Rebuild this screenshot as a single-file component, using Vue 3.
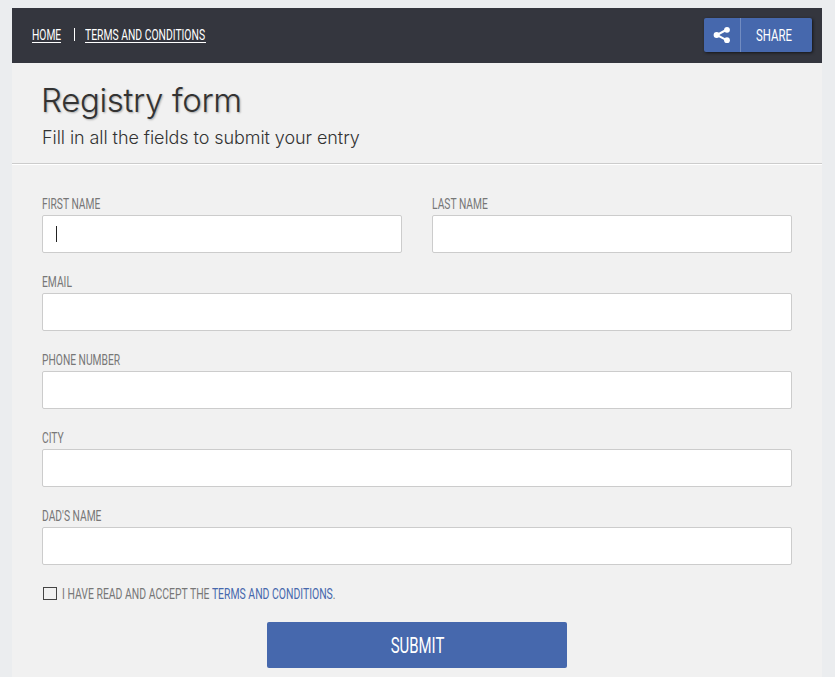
<template>
  <div class="page">
    <header class="topbar">
      <nav class="nav">
        <a href="#" class="nav-home"><span class="condensed">HOME</span></a>
        <i class="divider"></i>
        <a href="#" class="nav-terms"><span class="condensed">TERMS AND CONDITIONS</span></a>
      </nav>
      <button type="button" class="share">
        <span class="share-icon">
          <svg width="18" height="18" viewBox="0 0 18 18">
            <path d="M14 3.5 3.8 9 14 14.3" fill="none" stroke="#fff" stroke-width="2" />
            <circle cx="14" cy="3.8" r="2.9" fill="#fff" />
            <circle cx="3.6" cy="9" r="3" fill="#fff" />
            <circle cx="14" cy="14.2" r="2.9" fill="#fff" />
          </svg>
        </span>
        <span class="share-label"><span class="condensed">SHARE</span></span>
      </button>
    </header>

    <section class="intro">
      <h1>Registry form</h1>
      <p>Fill in all the fields to submit your entry</p>
    </section>

    <form class="form" @submit.prevent>
      <div class="fields">
        <label v-for="field in fields" :key="field.id" class="field" :class="{ half: field.half }">
          <span class="condensed label">{{ field.label }}</span>
          <span class="control">
            <i v-if="active === field.id && !values[field.id]" class="caret"></i>
            <input v-model="values[field.id]" type="text" @focus="active = field.id" />
          </span>
        </label>
      </div>

      <div class="accept">
        <input v-model="accepted" type="checkbox" class="checkbox" />
        <span class="condensed accept-text">I HAVE READ AND ACCEPT THE <a href="#">TERMS AND CONDITIONS</a>.</span>
      </div>

      <button type="submit" class="submit"><span class="condensed">SUBMIT</span></button>
    </form>
  </div>
</template>

<script setup>
import { ref, reactive } from 'vue';

const fields = [
  { id: 'first', label: 'FIRST NAME', half: true },
  { id: 'last', label: 'LAST NAME', half: true },
  { id: 'email', label: 'EMAIL' },
  { id: 'phone', label: 'PHONE NUMBER' },
  { id: 'city', label: 'CITY' },
  { id: 'dad', label: "DAD'S NAME" }
];

const values = reactive({ first: '', last: '', email: '', phone: '', city: '', dad: '' });
const active = ref('first');
const accepted = ref(false);
</script>

<style>
body {
  background: #ebedef;
}
</style>

<style scoped>
.page {
  box-sizing: border-box;
  width: 810px;
  height: 669px;
  margin: 8px 0 0 12px;
  background: #f1f1f1;
  overflow: hidden;
  font-family: Roboto, "Liberation Sans", sans-serif;
}

.condensed {
  display: inline-block;
  white-space: nowrap;
  transform: scaleX(0.685);
  transform-origin: left center;
}

/* top bar */
.topbar {
  display: flex;
  justify-content: space-between;
  box-sizing: border-box;
  height: 55px;
  padding: 10px 10px 0 20px;
  background: #34363e;
}

.nav {
  display: flex;
  height: 33px;
  align-items: center;
}

.nav a {
  height: 16px;
  box-sizing: border-box;
  border-bottom: 1px solid #fff;
  color: #fff;
  font-size: 15px;
  line-height: 16px;
  text-decoration: none;
}

.nav-home {
  width: 29px;
}

.nav-terms {
  width: 121px;
}

.nav-terms .condensed {
  transform: scaleX(0.69);
}

.divider {
  width: 1px;
  height: 13px;
  margin: 0 10px 0 13px;
  background: #fff;
}

.share {
  display: flex;
  width: 108px;
  height: 34px;
  padding: 0;
  border: 0;
  border-radius: 2px;
  background: #4668ad;
  box-shadow: 1px 1px 3px rgba(0, 0, 0, 0.6);
  color: #fff;
  font-family: inherit;
  font-size: 17px;
  line-height: 34px;
}

.share-icon {
  display: flex;
  align-items: center;
  width: 37px;
  height: 34px;
  padding-left: 9px;
  box-sizing: border-box;
  border-right: 1px solid #728cc1;
}

.share-label {
  width: 70px;
  padding-left: 15px;
  box-sizing: border-box;
  text-align: left;
}

.share-label .condensed {
  transform: scaleX(0.67);
}

/* heading */
.intro {
  box-sizing: border-box;
  height: 101px;
  padding: 16px 30px 0;
  border-bottom: 1px solid #ccc;
  box-shadow: 0 1px 0 #fff;
  color: #333;
  font-family: Inter, "Liberation Sans", sans-serif;
}

h1 {
  margin: 0 0 0 -1px;
  font-size: 33px;
  font-weight: 300;
  letter-spacing: -0.35px;
  line-height: 42px;
  text-shadow: 1px 1px 2px rgba(0, 0, 0, 0.3);
}

.intro p {
  margin: 5px 0 0;
  font-size: 18px;
  font-weight: 300;
  letter-spacing: -0.07px;
  line-height: 24px;
}

/* form */
.form {
  padding: 31px 30px 0;
}

.fields {
  display: grid;
  grid-template-columns: 1fr 1fr;
  gap: 20px 30px;
}

.field {
  display: block;
  grid-column: span 2;
  height: 58px;
}

.field.half {
  grid-column: span 1;
}

.label {
  display: block;
  height: 20px;
  color: #777;
  font-size: 15px;
  line-height: 19px;
}

.control {
  display: flex;
  align-items: center;
  box-sizing: border-box;
  height: 38px;
  padding-left: 13px;
  border: 1px solid #ccc;
  border-radius: 2px;
  background: #fff;
}

.control input {
  flex: 1;
  border: 0;
  padding: 0;
  outline: none;
  background: transparent;
  font-size: 15px;
}

.caret {
  width: 1px;
  height: 16px;
  background: #222;
}

.accept {
  display: flex;
  align-items: center;
  height: 18px;
  margin-top: 20px;
  padding-left: 1px;
}

.checkbox {
  appearance: none;
  box-sizing: border-box;
  width: 14px;
  height: 13px;
  margin: 0 5px 2px 0;
  border: 1px solid #444;
}

.checkbox:checked {
  background: #4668ad;
}

.accept-text {
  color: #777;
  font-size: 15px;
  line-height: 18px;
  transform: scaleX(0.695);
}

.accept-text a {
  color: #4668ad;
  text-decoration: none;
}

.submit {
  display: block;
  width: 300px;
  height: 46px;
  margin: 19px auto 0;
  padding: 0 0 0 1px;
  border: 0;
  border-radius: 2px;
  background: #4668ad;
  color: #fff;
  font-family: inherit;
  font-size: 22px;
}

.submit .condensed {
  transform: scaleX(0.68);
  transform-origin: center;
}
</style>
